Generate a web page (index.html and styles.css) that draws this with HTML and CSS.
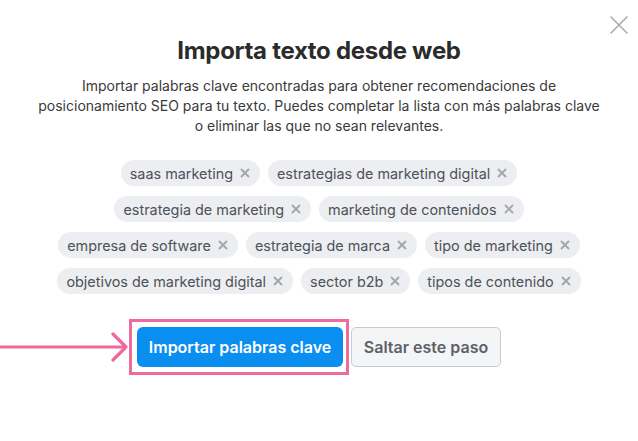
FILE: index.html
```html
<!DOCTYPE html>
<html lang="es">
<head>
<meta charset="utf-8">
<title>Importa texto desde web</title>
<link rel="stylesheet" href="styles.css">
</head>
<body>
<div class="modal">
  <button class="close" aria-label="Cerrar">
    <svg width="20" height="20" viewBox="0 0 20 20"><path d="M1.5 1.5L18.5 18.5M18.5 1.5L1.5 18.5" stroke="#a9abae" stroke-width="1.6" fill="none"/></svg>
  </button>
  <h1 class="title">Importa texto desde web</h1>
  <p class="desc">Importar palabras clave encontradas para obtener recomendaciones de posicionamiento SEO para tu texto. Puedes completar la lista con más palabras clave o eliminar las que no sean relevantes.</p>
  <ul class="tags">
    <li class="tag">saas marketing <svg class="x" viewBox="0 0 10 10"><path d="M1 1L9 9M9 1L1 9"/></svg></li>
    <li class="tag">estrategias de marketing digital <svg class="x" viewBox="0 0 10 10"><path d="M1 1L9 9M9 1L1 9"/></svg></li>
    <li class="tag">estrategia de marketing <svg class="x" viewBox="0 0 10 10"><path d="M1 1L9 9M9 1L1 9"/></svg></li>
    <li class="tag">marketing de contenidos <svg class="x" viewBox="0 0 10 10"><path d="M1 1L9 9M9 1L1 9"/></svg></li>
    <li class="tag">empresa de software <svg class="x" viewBox="0 0 10 10"><path d="M1 1L9 9M9 1L1 9"/></svg></li>
    <li class="tag">estrategia de marca <svg class="x" viewBox="0 0 10 10"><path d="M1 1L9 9M9 1L1 9"/></svg></li>
    <li class="tag">tipo de marketing <svg class="x" viewBox="0 0 10 10"><path d="M1 1L9 9M9 1L1 9"/></svg></li>
    <li class="tag">objetivos de marketing digital <svg class="x" viewBox="0 0 10 10"><path d="M1 1L9 9M9 1L1 9"/></svg></li>
    <li class="tag">sector b2b <svg class="x" viewBox="0 0 10 10"><path d="M1 1L9 9M9 1L1 9"/></svg></li>
    <li class="tag">tipos de contenido <svg class="x" viewBox="0 0 10 10"><path d="M1 1L9 9M9 1L1 9"/></svg></li>
  </ul>
  <div class="actions">
    <div class="highlight-wrap">
      <svg class="arrow" width="132" height="32" viewBox="0 0 132 32"><path d="M0 16H126M113 3L126 16L113 29" stroke="#f0699a" stroke-width="3.2" fill="none" stroke-linecap="round" stroke-linejoin="round"/></svg>
      <span class="highlight"></span>
      <button class="btn primary">Importar palabras clave</button>
    </div>
    <button class="btn secondary">Saltar este paso</button>
  </div>
</div>
</body>
</html>
```

FILE: styles.css
```css
* { box-sizing: border-box; }
html, body { margin: 0; padding: 0; background: #fff; }
body {
  font-family: Inter, "Noto Sans", "Liberation Sans", sans-serif;
  color: #333;
  width: 638px;
  height: 441px;
  overflow: hidden;
}
.modal {
  position: relative;
  display: flex;
  flex-direction: column;
  align-items: center;
  padding-top: 35px;
}
.close {
  position: absolute;
  top: 15px;
  right: 9px;
  border: 0;
  background: none;
  padding: 0;
  width: 20px;
  height: 20px;
}
.title {
  margin: 0;
  font-size: 24px;
  line-height: 32px;
  font-weight: 700;
  color: #2b2b2b;
  letter-spacing: -0.3px;
}
.desc {
  margin: 9px 0 0;
  width: 570px;
  text-align: center;
  font-size: 14px;
  line-height: 20px;
  color: #3a3a3a;
}
.tags {
  list-style: none;
  margin: 24px 0 0;
  padding: 0;
  width: 540px;
  display: flex;
  flex-wrap: wrap;
  justify-content: center;
  column-gap: 8px;
  row-gap: 10px;
}
.tag {
  height: 26px;
  display: flex;
  align-items: center;
  gap: 7px;
  padding: 0 10px 0 9px;
  border-radius: 13px;
  background: #edeef1;
  color: #4e5259;
  font-size: 14.4px;
  white-space: nowrap;
}
.x {
  width: 10px;
  height: 10px;
  stroke: #a3a6ab;
  stroke-width: 1.9;
  fill: none;
}
.actions {
  margin-top: 33px;
  display: flex;
  gap: 8px;
  align-items: center;
}
.highlight-wrap { position: relative; display: flex; }
.highlight {
  position: absolute;
  left: -8px; right: -6px; top: -8px; bottom: -8px;
  border: 3px solid #ef6b9c;
}
.arrow {
  position: absolute;
  left: -137px;
  top: 4px;
}
.btn {
  height: 40px;
  font-family: inherit;
  font-size: 16px;
  font-weight: 600;
  border-radius: 6px;
  padding: 0;
  white-space: nowrap;
}
.primary {
  width: 206px;
  background: #0a8ef0;
  color: #fff;
  border: 0;
}
.secondary {
  width: 150px;
  background: #f4f5f7;
  color: #5e6168;
  border: 1px solid #c8cbd0;
  border-radius: 5px;
}
```
